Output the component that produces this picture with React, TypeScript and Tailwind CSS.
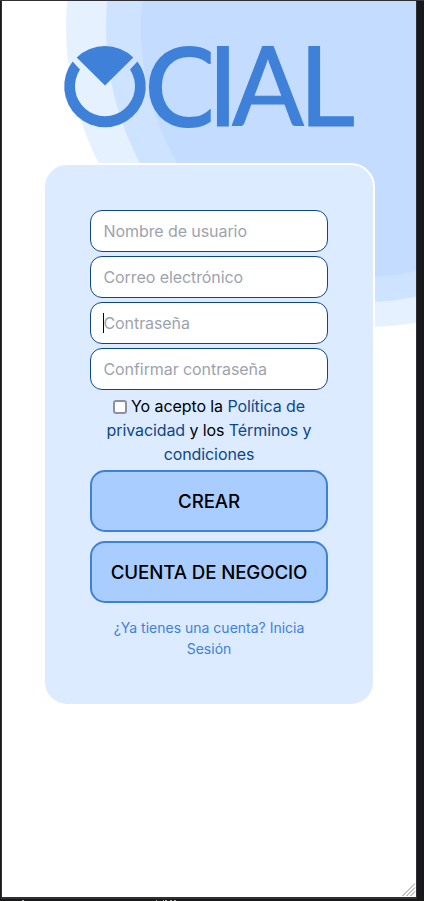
const fields = [
  { id: 'user', placeholder: 'Nombre de usuario', focused: false },
  { id: 'mail', placeholder: 'Correo electrónico', focused: false },
  { id: 'password', placeholder: 'Contraseña', focused: true },
  { id: 'confirm', placeholder: 'Confirmar contraseña', focused: false },
];

function Backdrop() {
  return (
    <svg className="absolute inset-0" width="414" height="896" viewBox="0 0 414 896" aria-hidden="true">
      <circle cx="364" cy="26" r="300" fill="#e6f1ff" />
      <ellipse cx="364" cy="26" rx="260" ry="275" fill="#cee3ff" />
      <ellipse cx="364" cy="26" rx="225" ry="250" fill="#c4dcff" />
    </svg>
  );
}

function Logo() {
  return (
    <svg width="290" height="82" viewBox="64 46 290 82" className="block overflow-visible" fill="#3f81d9">
      <defs>
        <clipPath id="c-edge">
          <rect x="140" y="40" width="70.7" height="94" />
        </clipPath>
      </defs>
      <path d="M105 85.5 L76.7 57.4 A41 41 0 0 1 133.3 57.4 Z" />
      <path d="M72.6 61.6 A40.8 40.8 0 1 0 137.4 61.6 L130 69.6 A30 30 0 1 1 80 69.6 Z" />
      <g fontFamily="Lato, sans-serif" fontWeight="400" fontSize="110" stroke="#3f81d9" strokeWidth="1.2" strokeLinejoin="miter">
        <g clipPath="url(#c-edge)">
          <text transform="translate(144.5 125.8) scale(1.02 0.985)" strokeWidth="1.8">C</text>
        </g>
        <text transform="translate(207.4 126.4)">I</text>
        <text transform="translate(232 126.4) scale(0.965 1)">A</text>
        <text transform="translate(299 126.4) scale(0.99 1)">L</text>
      </g>
    </svg>
  );
}

function Field({ placeholder, focused }: { placeholder: string; focused: boolean }) {
  return (
    <div className="relative h-[42px]">
      <input
        placeholder={placeholder}
        className="block h-full w-full rounded-xl border border-[#0d4788] bg-white pl-[12.5px] pr-3 text-base tracking-[-0.08px] text-black outline-none placeholder:text-[#9ca3af]"
      />
      {focused && <span className="absolute left-[13px] top-[11px] h-5 w-px bg-black" />}
    </div>
  );
}

function ActionButton({ label }: { label: string }) {
  return (
    <button className="block h-[62px] w-full whitespace-nowrap rounded-[15px] border-2 border-[#3f81d9] bg-[#aacdff] pt-[2px] text-[18.72px] font-medium tracking-[-0.12px] text-black">
      {label}
    </button>
  );
}

export default function App() {
  return (
    <div className="relative h-[901px] w-[424px] overflow-hidden bg-[#19191a] pl-[2px] pt-px font-['Inter','Liberation_Sans',sans-serif]">
      <div className="absolute inset-x-0 top-0 h-px bg-[#3b3740]" />
      <div className="absolute left-px top-0 h-[899px] w-[416px] bg-[#303034]" />
      <main className="relative flex h-[896px] w-[414px] flex-col overflow-hidden bg-white">
        <Backdrop />
        <header className="relative ml-[62px] mt-[45px]">
          <Logo />
        </header>
        <section className="relative ml-[41px] mt-[35px] h-[543px] w-[332px] rounded-3xl border-2 border-white bg-[#dcebff] p-[45px]">
          <form className="flex flex-col">
            <div className="flex flex-col gap-1">
              {fields.map((f) => (
                <Field key={f.id} placeholder={f.placeholder} focused={f.focused} />
              ))}
            </div>
            <p className="mt-1 text-center text-base leading-6 tracking-[-0.09px] text-black">
              <span className="mr-1 inline-block h-[14px] w-[14px] rounded-[3px] border-2 border-[#8f8f9d] bg-white align-[-2px]" />
              Yo acepto la <a className="text-[#0d4788]">Política de privacidad</a> y los{' '}
              <a className="text-[#0d4788]">Términos y condiciones</a>
            </p>
            <div className="mt-1 flex flex-col gap-[9px]">
              <ActionButton label="CREAR" />
              <ActionButton label="CUENTA DE NEGOCIO" />
            </div>
            <a className="mt-[14px] text-center text-sm leading-[21px] text-[#3f81d9]">
              ¿Ya tienes una cuenta? Inicia Sesión
            </a>
          </form>
        </section>
        <svg className="absolute bottom-0 right-0" width="14" height="14" viewBox="0 0 14 14" stroke="#8a8a8a" strokeWidth="1" aria-hidden="true">
          <path d="M0.5 13L13 0.5M4.5 13L13 4.5M8.5 13L13 8.5" />
        </svg>
      </main>
      <svg className="absolute bottom-0 left-0" width="424" height="2" fill="#aaa9a4" aria-hidden="true">
        <path d="M22 1h2v1h-2zM156 1h1v1h-1zM163 1h1v1h-1zM165 1h2v1h-2zM170 1h2v1h-2zM174 1h2v1h-2z" />
      </svg>
    </div>
  );
}
